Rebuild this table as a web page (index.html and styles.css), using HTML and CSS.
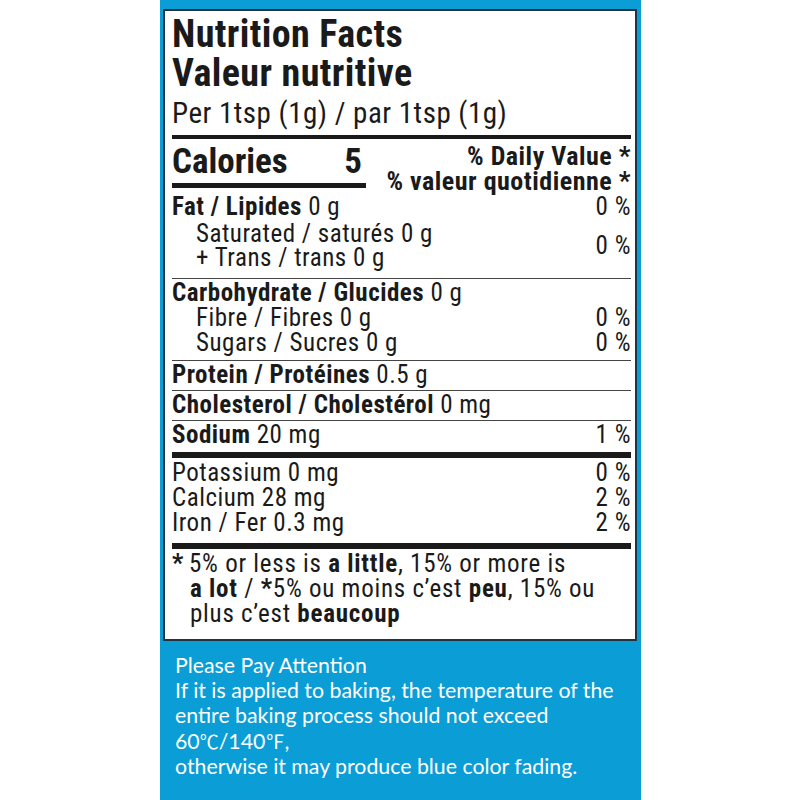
FILE: index.html
```html
<!DOCTYPE html>
<html lang="en">
<head>
<meta charset="utf-8">
<title>Nutrition Facts</title>
<link rel="stylesheet" href="styles.css">
</head>
<body>
<div class="panel">
  <div class="label">
    <div class="head">
      <h1 class="title">Nutrition Facts<br>Valeur nutritive</h1>
      <div class="serving">Per 1tsp (1g) / par 1tsp (1g)</div>
    </div>
    <div class="cal-section">
      <div class="cal-col">
        <div class="cal-line"><span>Calories</span><span>5</span></div>
        <div class="cal-bar"></div>
      </div>
      <div class="dv">
        <div>% Daily Value <span class="ast">*</span></div>
        <div>% valeur quotidienne <span class="ast">*</span></div>
      </div>
    </div>
    <div class="group group-fat">
      <div class="row"><span><b>Fat / Lipides</b> 0 g</span><span>0 %</span></div>
      <div class="sub-pair">
        <div class="sub-lines">
          <div>Saturated / saturés 0 g</div>
          <div>+ Trans / trans 0 g</div>
        </div>
        <span>0 %</span>
      </div>
    </div>
    <div class="group group-carb">
      <div class="row"><span><b>Carbohydrate / Glucides</b> 0 g</span></div>
      <div class="row sub"><span>Fibre / Fibres 0 g</span><span>0 %</span></div>
      <div class="row sub"><span>Sugars / Sucres 0 g</span><span>0 %</span></div>
    </div>
    <div class="group single"><div class="row"><span><b>Protein / Protéines</b> 0.5 g</span></div></div>
    <div class="group single"><div class="row"><span><b>Cholesterol / Cholestérol</b> 0 mg</span></div></div>
    <div class="group single sodium"><div class="row"><span><b>Sodium</b> 20 mg</span><span>1 %</span></div></div>
    <div class="group minerals">
      <div class="row"><span>Potassium 0 mg</span><span>0 %</span></div>
      <div class="row"><span>Calcium 28 mg</span><span>2 %</span></div>
      <div class="row"><span>Iron / Fer 0.3 mg</span><span>2 %</span></div>
    </div>
    <p class="foot"><span class="ast hang">*</span>5% or less is <b>a little</b>, 15% or more is<br><b>a lot</b> / <span class="ast">*</span>5% ou moins c’est <b>peu</b>, 15% ou<br>plus c’est <b>beaucoup</b></p>
  </div>
  <div class="notice">
    <p>Please Pay Attention</p>
    <p>If it is applied to baking, the temperature of the entire baking process should not exceed</p>
    <p>60<span class="deg">℃</span>/140<span class="deg">℉</span>,</p>
    <p>otherwise it may produce blue color fading.</p>
  </div>
</div>
</body>
</html>
```
FILE: styles.css
```css
html, body {
  margin: 0;
  padding: 0;
  background: #ffffff;
}
body {
  width: 800px;
  height: 800px;
  overflow: hidden;
}
.panel {
  margin-left: 160px;
  width: 481px;
  height: 800px;
  background: #0a9dd6;
  padding-top: 9px;
  box-sizing: border-box;
}
.label {
  margin-left: 3px;
  width: 474px;
  box-sizing: border-box;
  background: #ffffff;
  border: 2px solid #1f3442;
  padding: 0 4px 0 7px;
  color: #1a1a1a;
  font-family: "Roboto Condensed", Roboto, sans-serif;
  font-size: 25px;
  line-height: 25px;
  letter-spacing: 0.5px;
}
.head {
  padding-top: 4px;
  padding-bottom: 7px;
  border-bottom: 4px solid #1a1a1a;
}
.title {
  margin: 0;
  font-size: 38px;
  line-height: 39px;
  font-weight: bold;
  letter-spacing: 0.4px;
}
.serving {
  margin-top: 5px;
  font-size: 29px;
  line-height: 30px;
  letter-spacing: 0.5px;
}
.cal-section {
  display: flex;
  justify-content: space-between;
  padding-top: 5px;
}
.cal-col {
  width: 194px;
}
.cal-line {
  display: flex;
  justify-content: space-between;
  padding-right: 4px;
  font-size: 35px;
  line-height: 36px;
  font-weight: bold;
  letter-spacing: 0;
}
.cal-bar {
  margin-top: 3px;
  height: 5px;
  background: #1a1a1a;
}
.dv {
  text-align: right;
  font-weight: bold;
  font-size: 26px;
  line-height: 25px;
  letter-spacing: 0.5px;
  white-space: nowrap;
}
.ast {
  font-weight: bold;
}
.row {
  display: flex;
  justify-content: space-between;
}
.sub {
  padding-left: 24px;
}
.group {
  border-bottom: 1px solid #444;
}
.group-fat {
  padding-bottom: 8px;
}
.sub-pair {
  display: flex;
  justify-content: space-between;
  align-items: center;
  padding-top: 3px;
  padding-left: 24px;
  line-height: 24px;
}
.group-carb {
  padding-top: 1px;
  padding-bottom: 5px;
}
.single {
  padding-top: 1px;
  padding-bottom: 3px;
}
.sodium {
  border-bottom: 6px solid #1a1a1a;
  padding-bottom: 5px;
}
.minerals {
  padding-top: 2px;
  padding-bottom: 8px;
  border-bottom: 6px solid #1a1a1a;
}
.foot {
  margin: 0;
  padding: 2px 0 13px 18px;
  text-indent: -18px;
  letter-spacing: 0.75px;
  white-space: nowrap;
}
.hang {
  display: inline-block;
  width: 17px;
  text-indent: 0;
}
.notice {
  padding: 12px 0 0 15px;
  color: #ffffff;
  font-family: Lato, "Noto Sans CJK SC", sans-serif;
  font-size: 21.3px;
  line-height: 25px;
}
.notice p {
  margin: 0;
  width: 455px;
}
.deg {
  font-family: "Noto Sans CJK SC", sans-serif;
  font-size: 19px;
}
```
